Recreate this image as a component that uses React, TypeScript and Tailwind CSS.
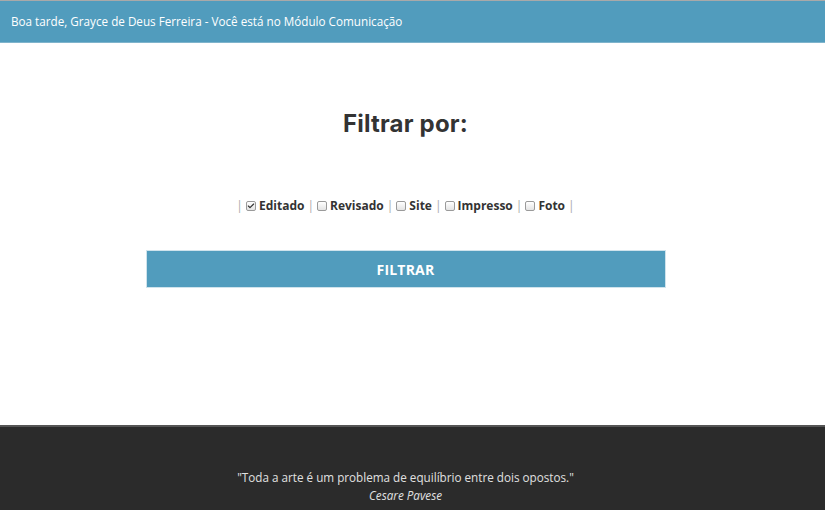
import { Check } from "lucide-react";

const filtros = [
  { label: "Editado", checked: true },
  { label: "Revisado", checked: false },
  { label: "Site", checked: false },
  { label: "Impresso", checked: false },
  { label: "Foto", checked: false },
];

function Box({ checked }: { checked: boolean }) {
  return (
    <span className="inline-flex w-[10px] h-[10px] items-center justify-center rounded-[2px] border border-[#9a9a9a] bg-gradient-to-b from-white to-[#e4e4e4]">
      {checked && <Check size={8} strokeWidth={3.5} className="text-[#333]" />}
    </span>
  );
}

export default function App() {
  return (
    <div className="w-[825px] h-[510px] flex flex-col bg-white font-['Open_Sans',sans-serif] overflow-hidden">
      {/* Header */}
      <div className="h-[43px] shrink-0 bg-[#519cbd] border-t border-[#a9a9a9] border-b border-b-[#7fb4cc] flex items-center px-[11px]">
        <span className="text-[11.7px] text-white">
          Boa tarde, Grayce de Deus Ferreira - Você está no Módulo Comunicação
        </span>
      </div>

      {/* Conteúdo */}
      <div className="flex-1 w-[811px] flex flex-col items-center pt-[66px]">
        <h1 className="text-[24px] font-bold text-[#333] font-['Inter',sans-serif] tracking-[0.2px] leading-[30px]">
          Filtrar por:
        </h1>

        <div className="mt-[58px] flex items-center gap-[3px] text-[12px] font-bold text-[#333]">
          <span className="text-[#aaa] font-normal">|</span>
          {filtros.map((f) => (
            <span key={f.label} className="flex items-center gap-[3px]">
              <Box checked={f.checked} />
              <span>{f.label}</span>
              <span className="text-[#aaa] font-normal">|</span>
            </span>
          ))}
        </div>

        <button className="mt-[35px] w-[520px] h-[38px] bg-[#519cbd] border border-[#cfe3ec] text-white text-[14px] font-bold tracking-[0.2px]">
          FILTRAR
        </button>
      </div>

      {/* Rodapé */}
      <div className="h-[85px] shrink-0 bg-[#2b2b2b] border-t-2 border-[#555]">
        <div className="w-[811px] flex flex-col items-center pt-[41px] text-[11.7px] text-[#e0e0e0] leading-[18px]">
          <p>"Toda a arte é um problema de equilíbrio entre dois opostos."</p>
          <p className="italic">Cesare Pavese</p>
        </div>
      </div>
    </div>
  );
}
